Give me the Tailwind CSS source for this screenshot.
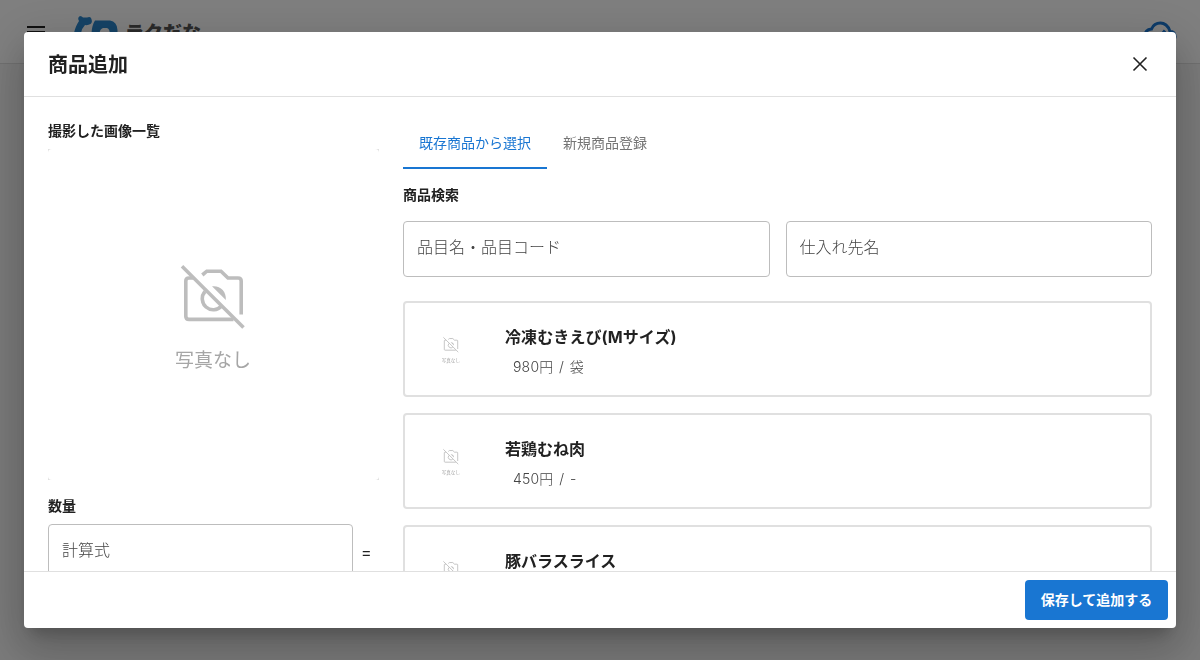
<!DOCTYPE html>
<html lang="ja">
  <head>
    <meta charset="UTF-8" />
    <meta name="viewport" content="width=device-width, initial-scale=1.0" />
    <title>ラクだな | 商品追加</title>
    <script src="https://cdn.jsdelivr.net/npm/@tailwindcss/browser@4"></script>
  </head>
  <body
    class="h-screen overflow-hidden bg-[#f5f5f5] font-['Noto_Sans_CJK_JP',sans-serif] text-[#212121]"
  >
    <!-- Símbolo compartido: sin foto -->
    <svg class="hidden">
      <symbol id="no-photo" viewBox="0 0 331 331">
        <g fill="none" stroke="#bdbdbd" stroke-width="3.6">
          <path d="M134 117.300L195.500 178.500" />
          <path
            d="M154.300 126L158.800 122.200H173L180 129H190Q193.200 129 193.200 132V165.500"
          />
          <path
            d="M145 129H141Q137.800 129 137.800 132V167.200Q137.800 170.400 141 170.400H185.500"
          />
          <path d="M157 142.500A10.800 10.800 0 1 0 173.500 157" />
        </g>
        <path
          d="M164 137.300C172 136.300 178.500 142 177.800 151Z"
          fill="#bdbdbd"
        />
        <text
          x="165"
          y="218"
          text-anchor="middle"
          font-size="19"
          fill="#a6a6a6"
        >
          写真なし
        </text>
      </symbol>
    </svg>

    <header
      class="flex h-16 items-start border-b border-[#e0e0e0] bg-white pt-4 pr-6 pl-6"
    >
      <button class="mt-[1px]" aria-label="メニュー">
        <svg class="h-6 w-6" viewBox="0 0 24 24" fill="#212121">
          <path d="M3 18h18v-2H3v2zm0-5h18v-2H3v2zm0-7v2h18V6H3z" transform="translate(0 3)" />
        </svg>
      </button>
      <div class="ml-6 flex items-start">
        <svg class="h-8 w-[54px]" viewBox="0 0 54 32" fill="#2a86cc">
          <path
            d="M2 17C3 12 5 8 7 5Q5 1.500 8 0Q10 0 11 1.500H15Q18 .5 19 2Q21 6 18.500 8Q16 9.500 13 9Q10 12 9 17Z"
          />
          <path
            d="M19.500 17Q20 9 23 4.500H38Q45 5.500 45.500 14V20H38Q38 12.500 35 12H31Q28 13 27.500 17Z"
          />
        </svg>
        <span
          class="mt-[4px] -ml-[1px] text-[19px] leading-[24px] font-black text-[#555]"
          >ラクだな</span
        >
      </div>
      <svg
        class="mt-1 -mr-px ml-auto h-6 w-9"
        viewBox="0 0 36 24"
        fill="none"
        stroke="#1976d2"
        stroke-width="3"
      >
        <path
          d="M28 21C33 21 34.500 18 34 15.500C33.500 12.500 31 11.500 29 11.500C27.500 5.500 23 3 19.500 3C15 3 12 5.500 10.500 9C6.500 9.500 4 12 4 15.500C4 19 7 21 10 21Z"
        />
        <path d="M14 15L18 18L24 10.500" />
      </svg>
    </header>

    <div class="fixed inset-0 flex bg-black/50 px-6 py-8">
      <div
        role="dialog"
        class="flex w-full flex-col overflow-hidden rounded bg-white shadow-[0px_11px_15px_-7px_rgba(0,0,0,0.2),0px_24px_38px_3px_rgba(0,0,0,0.14),0px_9px_46px_8px_rgba(0,0,0,0.12)]"
      >
        <div
          class="flex h-[65px] shrink-0 items-center justify-between border-b border-[#e0e0e0] px-6"
        >
          <h2 class="text-xl font-bold">商品追加</h2>
          <button aria-label="閉じる">
            <svg
              class="h-6 w-6"
              viewBox="0 0 24 24"
              fill="none"
              stroke="#212121"
              stroke-width="1.600"
            >
              <path d="M5.500 5.500L18.500 18.500M18.500 5.500L5.500 18.500" />
            </svg>
          </button>
        </div>

        <div class="flex min-h-0 flex-1 gap-6 overflow-hidden px-6 pt-6">
          <section class="w-[331px] shrink-0">
            <h3 class="-mt-px text-sm leading-5 font-bold">撮影した画像一覧</h3>
            <div class="mt-[9px] bg-[#e0e0e0]">
              <div class="rounded bg-white">
                <svg class="block h-[331px] w-[331px]">
                  <use href="#no-photo" />
                </svg>
              </div>
            </div>
            <h3 class="mt-[15px] text-sm leading-5 font-bold">数量</h3>
            <div class="mt-[9px] flex items-center gap-2">
              <div
                class="flex h-14 w-[305px] items-center rounded border border-[#bdbdbd] px-[13px] pb-[6px] font-light text-[#444]"
              >
                計算式
              </div>
              <span class="font-['Inter'] text-base">=</span>
            </div>
          </section>

          <section class="min-w-0 flex-1">
            <div class="flex h-12 text-sm">
              <button
                class="w-36 border-b-2 border-[#1976d2] pb-[4px] text-[#1976d2]"
              >
                既存商品から選択
              </button>
              <button class="px-4 pb-[6px] text-[#757575]">新規商品登録</button>
            </div>
            <h3 class="mt-[15px] text-sm leading-5 font-bold">商品検索</h3>
            <div class="mt-[17px] grid grid-cols-2 gap-4 font-light text-[#444]">
              <div
                class="flex h-14 items-center rounded border border-[#bdbdbd] px-[13px] pb-[6px]"
              >
                品目名・品目コード
              </div>
              <div
                class="flex h-14 items-center rounded border border-[#bdbdbd] px-[13px] pb-[6px]"
              >
                仕入れ先名
              </div>
            </div>

            <div
              class="mt-6 flex flex-col gap-4 font-['Inter','Noto_Sans_CJK_JP',sans-serif]"
            >
              <div class="flex h-24 rounded border-2 border-[#e0e0e0] p-[6px]">
                <svg class="h-20 w-20 font-['Noto_Sans_CJK_JP',sans-serif]">
                  <use href="#no-photo" />
                </svg>
                <div class="ml-[14px] pt-4">
                  <p class="leading-6 font-bold tracking-[0.1px]">
                    冷凍むきえび(Mサイズ)
                  </p>
                  <p
                    class="mt-2 ml-2 text-sm leading-5 font-light tracking-[0.2px] text-[#444] [word-spacing:1.5px]"
                  >
                    980円 / 袋
                  </p>
                </div>
              </div>
              <div class="flex h-24 rounded border-2 border-[#e0e0e0] p-[6px]">
                <svg class="h-20 w-20 font-['Noto_Sans_CJK_JP',sans-serif]">
                  <use href="#no-photo" />
                </svg>
                <div class="ml-[14px] pt-4">
                  <p class="leading-6 font-bold">若鶏むね肉</p>
                  <p
                    class="mt-2 ml-2 text-sm leading-5 font-light tracking-[0.2px] text-[#444] [word-spacing:1.5px]"
                  >
                    450円 / -
                  </p>
                </div>
              </div>
              <div class="flex h-24 rounded border-2 border-[#e0e0e0] p-[6px]">
                <svg class="h-20 w-20 font-['Noto_Sans_CJK_JP',sans-serif]">
                  <use href="#no-photo" />
                </svg>
                <div class="ml-[14px] pt-4">
                  <p class="leading-6 font-bold">豚バラスライス</p>
                </div>
              </div>
            </div>
          </section>
        </div>

        <div
          class="flex h-[57px] shrink-0 items-center justify-end border-t border-[#e0e0e0] px-2"
        >
          <button
            class="h-10 w-[143px] rounded bg-[#1976d2] pb-[2px] text-sm font-bold text-white"
          >
            保存して追加する
          </button>
        </div>
      </div>
    </div>
  </body>
</html>
